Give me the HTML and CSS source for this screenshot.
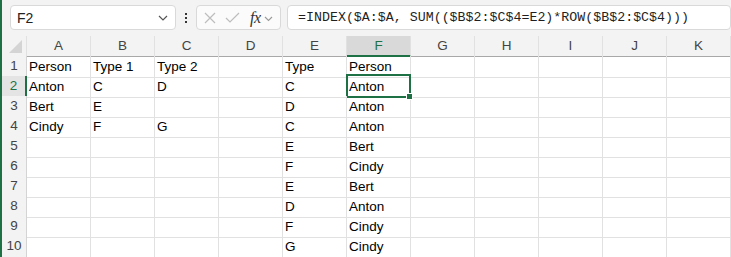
FILE: index.html
```html
<!DOCTYPE html>
<html lang="en">
<head>
    <meta charset="UTF-8">
    <title>Sheet</title>
    <link rel="stylesheet" href="styles.css">
</head>
<body>
    <div class="app">
        <div class="toolbar">
            <div class="name-box">
                <span class="name-text">F2</span>
                <svg class="chev" width="10" height="6" viewBox="0 0 10 6"><path d="M1 1 L5 5 L9 1" fill="none" stroke="#555" stroke-width="1.2"/></svg>
            </div>
            <div class="dots"><span></span><span></span><span></span></div>
            <div class="fx-group">
                <svg class="fx-icon" width="12" height="12" viewBox="0 0 12 12"><path d="M1 1 L11 11 M11 1 L1 11" stroke="#bdbdbd" stroke-width="1.2" fill="none"/></svg>
                <svg class="fx-icon" width="15" height="12" viewBox="0 0 15 12"><path d="M1 6 L5 10 L14 1" stroke="#bdbdbd" stroke-width="1.2" fill="none"/></svg>
                <span class="fx-text">fx</span>
                <svg class="fx-chev" width="9" height="6" viewBox="0 0 9 6"><path d="M1 1 L4.5 4.5 L8 1" fill="none" stroke="#9a9a9a" stroke-width="1.1"/></svg>
            </div>
            <div class="formula-box">=INDEX($A:$A, SUM(($B$2:$C$4=E2)*ROW($B$2:$C$4)))</div>
        </div>

        <div class="sheet">
            <div class="row head-row">
                <div class="corner"><svg width="13" height="13" viewBox="0 0 13 13"><path d="M13 0 L13 13 L0 13 Z" fill="#d4d4d4"/></svg></div>
                <div class="col-head">A</div>
                <div class="col-head">B</div>
                <div class="col-head">C</div>
                <div class="col-head">D</div>
                <div class="col-head">E</div>
                <div class="col-head active">F</div>
                <div class="col-head">G</div>
                <div class="col-head">H</div>
                <div class="col-head">I</div>
                <div class="col-head">J</div>
                <div class="col-head">K</div>
            </div>
            <div class="row">
                <div class="row-head">1</div>
                <div class="cell">Person</div><div class="cell">Type 1</div><div class="cell">Type 2</div><div class="cell"></div>
                <div class="cell">Type</div><div class="cell">Person</div>
                <div class="cell"></div><div class="cell"></div><div class="cell"></div><div class="cell"></div><div class="cell"></div>
            </div>
            <div class="row">
                <div class="row-head active">2</div>
                <div class="cell">Anton</div><div class="cell">C</div><div class="cell">D</div><div class="cell"></div>
                <div class="cell">C</div><div class="cell selected">Anton<span class="handle"></span></div>
                <div class="cell"></div><div class="cell"></div><div class="cell"></div><div class="cell"></div><div class="cell"></div>
            </div>
            <div class="row">
                <div class="row-head">3</div>
                <div class="cell">Bert</div><div class="cell">E</div><div class="cell"></div><div class="cell"></div>
                <div class="cell">D</div><div class="cell">Anton</div>
                <div class="cell"></div><div class="cell"></div><div class="cell"></div><div class="cell"></div><div class="cell"></div>
            </div>
            <div class="row">
                <div class="row-head">4</div>
                <div class="cell">Cindy</div><div class="cell">F</div><div class="cell">G</div><div class="cell"></div>
                <div class="cell">C</div><div class="cell">Anton</div>
                <div class="cell"></div><div class="cell"></div><div class="cell"></div><div class="cell"></div><div class="cell"></div>
            </div>
            <div class="row">
                <div class="row-head">5</div>
                <div class="cell"></div><div class="cell"></div><div class="cell"></div><div class="cell"></div>
                <div class="cell">E</div><div class="cell">Bert</div>
                <div class="cell"></div><div class="cell"></div><div class="cell"></div><div class="cell"></div><div class="cell"></div>
            </div>
            <div class="row">
                <div class="row-head">6</div>
                <div class="cell"></div><div class="cell"></div><div class="cell"></div><div class="cell"></div>
                <div class="cell">F</div><div class="cell">Cindy</div>
                <div class="cell"></div><div class="cell"></div><div class="cell"></div><div class="cell"></div><div class="cell"></div>
            </div>
            <div class="row">
                <div class="row-head">7</div>
                <div class="cell"></div><div class="cell"></div><div class="cell"></div><div class="cell"></div>
                <div class="cell">E</div><div class="cell">Bert</div>
                <div class="cell"></div><div class="cell"></div><div class="cell"></div><div class="cell"></div><div class="cell"></div>
            </div>
            <div class="row">
                <div class="row-head">8</div>
                <div class="cell"></div><div class="cell"></div><div class="cell"></div><div class="cell"></div>
                <div class="cell">D</div><div class="cell">Anton</div>
                <div class="cell"></div><div class="cell"></div><div class="cell"></div><div class="cell"></div><div class="cell"></div>
            </div>
            <div class="row">
                <div class="row-head">9</div>
                <div class="cell"></div><div class="cell"></div><div class="cell"></div><div class="cell"></div>
                <div class="cell">F</div><div class="cell">Cindy</div>
                <div class="cell"></div><div class="cell"></div><div class="cell"></div><div class="cell"></div><div class="cell"></div>
            </div>
            <div class="row">
                <div class="row-head">10</div>
                <div class="cell"></div><div class="cell"></div><div class="cell"></div><div class="cell"></div>
                <div class="cell">G</div><div class="cell">Cindy</div>
                <div class="cell"></div><div class="cell"></div><div class="cell"></div><div class="cell"></div><div class="cell"></div>
            </div>
        </div>
    </div>
</body>
</html>
```

FILE: styles.css
```css
body {
    margin: 0;
    background: #ffffff;
    font-family: 'Liberation Sans', Arial, sans-serif;
    overflow: hidden;
}

.app {
    width: 731px;
    height: 257px;
    box-sizing: border-box;
    border-left: 2px solid #1e7145;
    overflow: hidden;
}

/* formula bar */
.toolbar {
    height: 36px;
    box-sizing: border-box;
    padding-top: 5px;
    padding-left: 8px;
    display: flex;
    align-items: flex-start;
    background: #f3f3f3;
}

.name-box,
.fx-group,
.formula-box {
    height: 25px;
    box-sizing: border-box;
    background: #ffffff;
    border: 1px solid #d9d9d9;
    border-radius: 4px;
}

.name-box {
    width: 166px;
    display: flex;
    align-items: center;
    justify-content: space-between;
    padding: 0 7px 0 6px;
}

.name-text {
    font-size: 14px;
    color: #222;
}

.chev {
    margin-top: 1px;
}

.dots {
    width: 20px;
    height: 25px;
    display: flex;
    flex-direction: column;
    align-items: center;
    justify-content: center;
    gap: 2px;
}

.dots span {
    width: 2px;
    height: 2px;
    background: #333;
}

.fx-group {
    width: 85px;
    display: flex;
    align-items: center;
    padding-left: 7px;
    background: #fbfbfb;
}

.fx-group .fx-icon:nth-child(2) {
    margin-left: 9px;
}

.fx-text {
    margin-left: 10px;
    font-family: 'Liberation Serif', 'Times New Roman', serif;
    font-style: italic;
    font-size: 16px;
    color: #333;
    letter-spacing: -0.5px;
}

.fx-chev {
    margin-left: 3px;
    margin-top: 2px;
}

.formula-box {
    margin-left: 6px;
    flex: 1;
    padding-left: 10px;
    font-family: 'Liberation Mono', 'Courier New', monospace;
    font-size: 13.3px;
    line-height: 23px;
    color: #1f1f1f;
    white-space: nowrap;
}

/* grid */
.row {
    display: grid;
    grid-template-columns: 25px repeat(11, 64px);
    height: 20px;
}

.row > div {
    box-sizing: border-box;
    border-right: 1px solid #e1e1e1;
    border-bottom: 1px solid #e1e1e1;
}

.head-row > div {
    background: #f3f3f3;
    border-bottom: 1px solid #a8a8a8;
}

.corner {
    display: flex;
    align-items: flex-end;
    justify-content: flex-end;
    padding: 0 4px 3px 0;
}

.col-head {
    text-align: center;
    font-size: 13.5px;
    line-height: 19px;
    color: #444;
}

.col-head.active {
    background: #d9d9d9 !important;
    color: #1e7145;
    border-bottom: 2px solid #1e7145 !important;
}

.row-head {
    background: #f3f3f3;
    text-align: center;
    font-size: 13.5px;
    line-height: 20px;
    color: #444;
    border-right-color: #d4d4d4 !important;
}

.row-head.active {
    background: #e4e4e4;
    color: #1e7145;
    border-right: 2px solid #1e7145 !important;
}

.cell {
    position: relative;
    padding-left: 2px;
    font-size: 13.5px;
    line-height: 21px;
    color: #000;
    white-space: nowrap;
}

.cell.selected::after {
    content: "";
    position: absolute;
    left: -1px;
    top: -2px;
    right: -1px;
    bottom: -1px;
    border: 2px solid #1e7145;
}

.handle {
    position: absolute;
    right: -3px;
    bottom: -3px;
    width: 5px;
    height: 5px;
    background: #1e7145;
    border: 1px solid #fff;
    z-index: 1;
}
```
